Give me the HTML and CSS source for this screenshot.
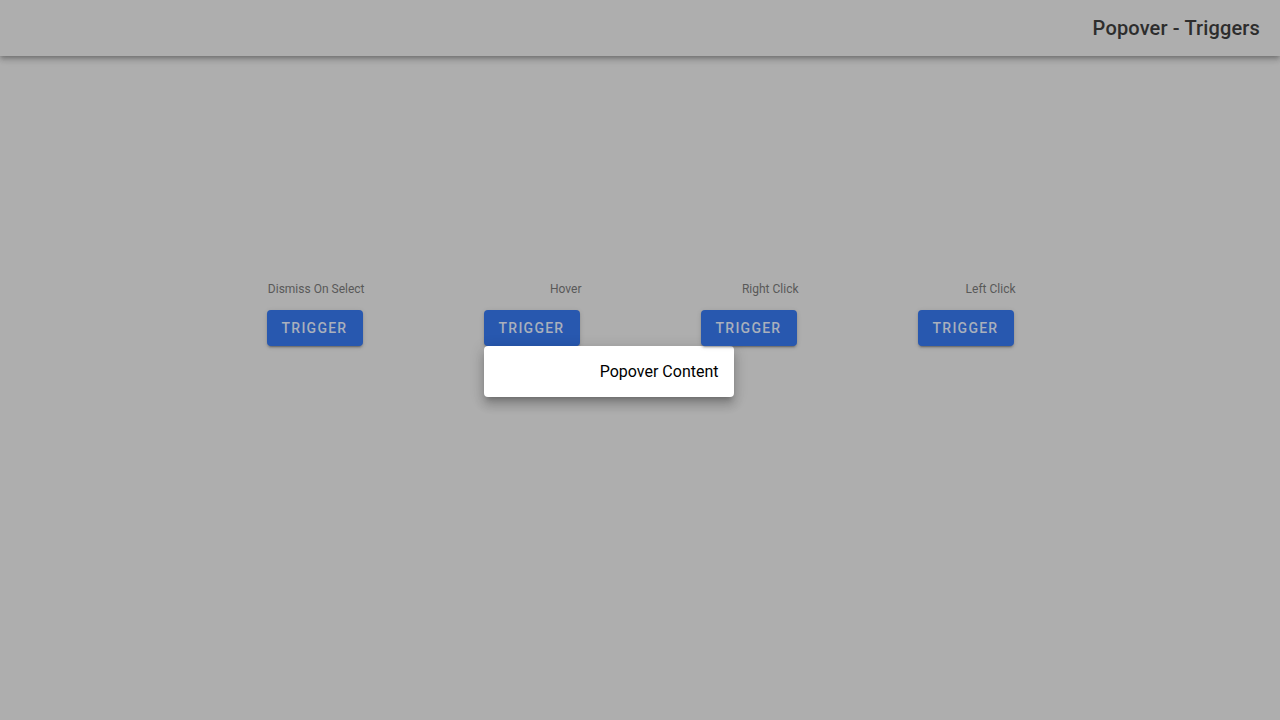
FILE: index.html
```html
<!DOCTYPE html>
<html lang="en">
<head>
<meta charset="utf-8">
<title>Popover - Triggers</title>
<link rel="stylesheet" href="styles.css">
</head>
<body>
<header class="toolbar">
  <h1 class="toolbar-title">Popover - Triggers</h1>
</header>
<main class="content">
  <div class="triggers">
    <div class="trigger-col">
      <div class="trigger-label">Dismiss On Select</div>
      <div class="trigger-anchor"><button class="trigger-btn">Trigger</button></div>
    </div>
    <div class="trigger-col">
      <div class="trigger-label">Hover</div>
      <div class="trigger-anchor">
        <button class="trigger-btn">Trigger</button>
        <div class="popover">Popover Content</div>
      </div>
    </div>
    <div class="trigger-col">
      <div class="trigger-label">Right Click</div>
      <div class="trigger-anchor"><button class="trigger-btn">Trigger</button></div>
    </div>
    <div class="trigger-col">
      <div class="trigger-label">Left Click</div>
      <div class="trigger-anchor"><button class="trigger-btn">Trigger</button></div>
    </div>
  </div>
</main>
</body>
</html>
```
FILE: styles.css
```css
html, body {
  margin: 0;
  padding: 0;
  height: 100%;
}
body {
  background: #aeaeae;
  font-family: Roboto, "Liberation Sans", Arial, sans-serif;
  overflow: hidden;
}
.toolbar {
  height: 56px;
  display: flex;
  align-items: center;
  justify-content: flex-end;
  padding: 0 20px;
  background: #aeaeae;
  box-shadow: 0 2px 4px -1px rgba(0,0,0,0.2), 0 4px 5px 0 rgba(0,0,0,0.14), 0 1px 10px 0 rgba(0,0,0,0.12);
  position: relative;
  z-index: 1;
}
.toolbar-title {
  margin: 0;
  font-size: 20px;
  font-weight: 500;
  color: #2d2d2d;
  letter-spacing: 0.15px;
}
.content {
  padding-top: 225px;
}
.triggers {
  display: flex;
  justify-content: center;
  gap: 119px;
  padding-left: 2px;
}
.trigger-col {
  width: 98px;
  display: flex;
  flex-direction: column;
  align-items: flex-start;
}
.trigger-label {
  align-self: stretch;
  text-align: right;
  font-size: 12px;
  line-height: 16px;
  color: #595959;
  margin-bottom: 13px;
}
.trigger-anchor {
  position: relative;
}
.trigger-btn {
  display: block;
  width: 96px;
  height: 36px;
  border: none;
  border-radius: 4px;
  background: #2858af;
  color: #aab0bc;
  font-family: Roboto, "Liberation Sans", Arial, sans-serif;
  font-size: 14px;
  font-weight: 500;
  letter-spacing: 1.25px;
  text-transform: uppercase;
  padding: 0;
  box-shadow: 0 3px 1px -2px rgba(0,0,0,0.2), 0 2px 2px 0 rgba(0,0,0,0.14), 0 1px 5px 0 rgba(0,0,0,0.12);
}
.popover {
  position: absolute;
  top: 100%;
  left: 0;
  width: 250px;
  height: 51px;
  box-sizing: border-box;
  padding: 0 15px;
  display: flex;
  align-items: center;
  justify-content: flex-end;
  background: #fff;
  color: #000;
  font-size: 16px;
  border-radius: 4px;
  box-shadow: 0 5px 5px -3px rgba(0,0,0,0.2), 0 8px 10px 1px rgba(0,0,0,0.14), 0 3px 14px 2px rgba(0,0,0,0.12);
  white-space: nowrap;
}
```
